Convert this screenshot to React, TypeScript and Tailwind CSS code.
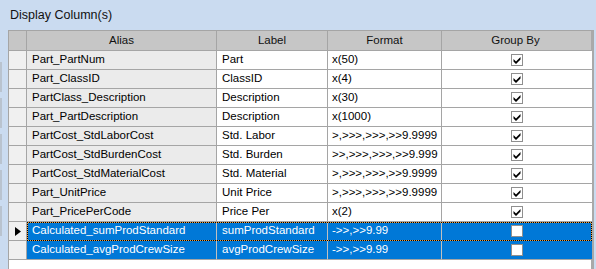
import React from "react";

type Row = {
  alias: string;
  label: string;
  format: string;
  groupBy: boolean;
  selected?: boolean;
  current?: boolean;
};

const rows: Row[] = [
  { alias: "Part_PartNum", label: "Part", format: "x(50)", groupBy: true },
  { alias: "Part_ClassID", label: "ClassID", format: "x(4)", groupBy: true },
  { alias: "PartClass_Description", label: "Description", format: "x(30)", groupBy: true },
  { alias: "Part_PartDescription", label: "Description", format: "x(1000)", groupBy: true },
  { alias: "PartCost_StdLaborCost", label: "Std. Labor", format: ">,>>>,>>>,>>9.9999", groupBy: true },
  { alias: "PartCost_StdBurdenCost", label: "Std. Burden", format: ">>,>>>,>>>,>>9.999", groupBy: true },
  { alias: "PartCost_StdMaterialCost", label: "Std. Material", format: ">,>>>,>>>,>>9.9999", groupBy: true },
  { alias: "Part_UnitPrice", label: "Unit Price", format: ">,>>>,>>>,>>9.9999", groupBy: true },
  { alias: "Part_PricePerCode", label: "Price Per", format: "x(2)", groupBy: true },
  {
    alias: "Calculated_sumProdStandard",
    label: "sumProdStandard",
    format: "->>,>>9.99",
    groupBy: false,
    selected: true,
    current: true,
  },
  {
    alias: "Calculated_avgProdCrewSize",
    label: "avgProdCrewSize",
    format: "->>,>>9.99",
    groupBy: false,
    selected: true,
  },
];

function CheckBox({ checked }: { checked: boolean }) {
  return (
    <div className="w-[12px] h-[12px] border border-[#8f8f8f] bg-white flex items-center justify-center">
      {checked && (
        <svg width="8" height="8" viewBox="0 0 8 8">
          <path d="M0.5 3 L3 5.5 L7.5 1 L7.5 3.5 L3 8 L0.5 5.5 Z" fill="#000" />
        </svg>
      )}
    </div>
  );
}

export default function App() {
  return (
    <div className="w-[596px] h-[269px] bg-[#cadbf0] flex font-['Liberation_Sans',Arial,sans-serif] text-black overflow-hidden">
      <div className="w-[2px] flex flex-col gap-[6px] pt-[62px]">
        <div className="h-[30px] bg-[#b9c3cf]" />
        <div className="h-[30px] bg-[#b9c3cf]" />
        <div className="h-[30px] bg-[#b9c3cf]" />
        <div className="h-[30px] bg-[#b9c3cf]" />
        <div className="h-[30px] bg-[#b9c3cf]" />
      </div>
      <div className="flex flex-col ml-[6px] flex-1">
        <div className="h-[30px] pl-[2px] pt-[8px] text-[12.5px] leading-[15px] text-[#111]">
          Display Column(s)
        </div>
        <div className="flex-1 w-[586px] bg-white border-l border-t border-[#a5a5a5] border-r-[3px] border-r-[#a9a9a9]">
          <div className="grid grid-cols-[18px_190px_111px_114px_150px] h-[20px] bg-[#c6c6c6] text-[11.5px] text-[#111] border-b border-[#a5a5a5]">
            <div className="border-r border-[#a5a5a5]" />
            <div className="border-r border-[#a5a5a5] flex items-center justify-center">Alias</div>
            <div className="border-r border-[#a5a5a5] flex items-center justify-center">Label</div>
            <div className="border-r border-[#a5a5a5] flex items-center justify-center">Format</div>
            <div className="flex items-center justify-center pr-[3px]">Group By</div>
          </div>
          {rows.map((r) => (
            <div
              key={r.alias}
              className="grid grid-cols-[18px_190px_111px_114px_150px] h-[19px] text-[11.5px]"
            >
              <div className="bg-[#f0f0f0] border-r border-b border-[#a5a5a5] flex items-center justify-center">
                {r.current && (
                  <svg width="6" height="9" viewBox="0 0 6 9">
                    <path d="M0 0 L6 4.5 L0 9 Z" fill="#000" />
                  </svg>
                )}
              </div>
              <div className="col-span-4 relative grid grid-cols-[190px_111px_114px_150px]">
                <div
                  className={`border-r border-b border-[#a5a5a5] flex items-center pl-[5px] whitespace-nowrap overflow-hidden ${
                    r.selected ? "bg-[#0078d7] text-white border-r-[#c0c0c0]" : "bg-[#ebebeb]"
                  }`}
                >
                  {r.alias}
                </div>
                <div
                  className={`border-r border-b border-[#a5a5a5] flex items-center pl-[5px] whitespace-nowrap overflow-hidden ${
                    r.selected ? "bg-[#0078d7] text-white border-r-[#c0c0c0]" : "bg-white"
                  }`}
                >
                  {r.label}
                </div>
                <div
                  className={`border-r border-b border-[#a5a5a5] flex items-center pl-[4px] whitespace-nowrap overflow-hidden ${
                    r.selected ? "bg-[#0078d7] text-white border-r-[#c0c0c0]" : "bg-white"
                  }`}
                >
                  {r.format}
                </div>
                <div
                  className={`border-b border-[#a5a5a5] flex items-center justify-center ${
                    r.selected ? "bg-[#0078d7]" : "bg-white"
                  }`}
                >
                  <CheckBox checked={r.groupBy} />
                </div>
                {r.current && (
                  <>
                    <div className="absolute inset-0 border border-[#f0a040] pointer-events-none" />
                    <div className="absolute inset-0 border border-dotted border-black pointer-events-none" />
                  </>
                )}
              </div>
            </div>
          ))}
        </div>
      </div>
    </div>
  );
}
